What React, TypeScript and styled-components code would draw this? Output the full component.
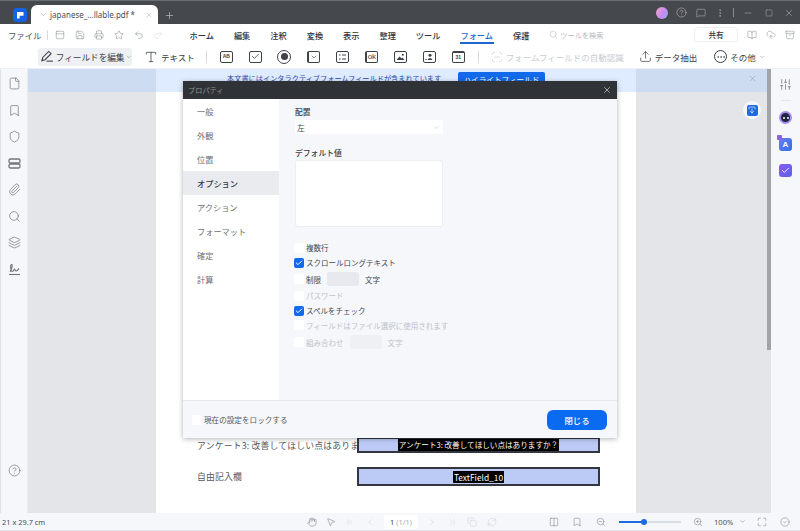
import styled, { createGlobalStyle } from 'styled-components';
import {
  Archive, Bookmark, BookOpen, Check, ChevronDown, ChevronFirst, ChevronLast, ChevronLeft, ChevronRight,
  CircleCheck, CircleHelp, CloudUpload, Columns2, Copy, Ellipsis, EllipsisVertical, File, Hand, Layers,
  Maximize, MessageSquare, Minus, MousePointer2, PanelTop, Paperclip, Plus, Printer, Redo2, RefreshCw,
  Save, ScanLine, Search, Shield, SlidersVertical, Square, Star, Type, Undo2, Upload, X, ZoomIn, ZoomOut,
} from 'lucide-react';

const GlobalStyle = createGlobalStyle`
  html, body { margin: 0; padding: 0; background: #fff; overflow: hidden; }
  * { box-sizing: border-box; }
  body { font-family: "Noto Sans CJK JP", "Noto Sans", sans-serif; color: #33373d; }
`;

const Screen = styled.div`
  position: relative;
  width: 800px;
  height: 531px;
  display: flex;
  flex-direction: column;
  overflow: hidden;
  background: #fff;
`;

/* title bar */
const TabBar = styled.div`
  height: 24px;
  background: #45484c;
  border-top: 1px solid #6b6e72;
  display: flex;
  align-items: flex-end;
  padding-left: 13px;
  flex: none;
`;
const AppLogo = styled.div`
  width: 14px;
  height: 14px;
  margin-bottom: 2px;
  border-radius: 4px;
  background: #1463e6;
  display: flex;
  align-items: center;
  justify-content: center;
  &::after {
    content: '';
    width: 7px;
    height: 7px;
    background: #fff;
    clip-path: polygon(0 0, 100% 0, 100% 60%, 45% 60%, 45% 100%, 0 100%);
  }
`;
const Tab = styled.div`
  width: 127px;
  height: 19px;
  margin-left: 4px;
  padding: 0 4px 0 8px;
  background: #fff;
  border-radius: 6px 6px 0 0;
  display: flex;
  align-items: center;
  color: #8b8f94;
`;
const TabName = styled.span`
  margin-left: 2px;
  width: 95px;
  font-size: 8px;
  font-family: "Noto Sans", sans-serif;
  white-space: nowrap;
  color: #4a4e54;
`;
const NewTab = styled.div`
  margin: 0 0 3px 6px;
  color: #c9cbce;
  display: flex;
`;
const WindowControls = styled.div`
  margin-left: auto;
  height: 23px;
  display: flex;
  align-items: center;
  color: #b9bcc0;
`;
const ControlSlot = styled.div<{ $w: number }>`
  width: ${(p) => p.$w}px;
  display: flex;
  justify-content: center;
`;
const Avatar = styled.div`
  width: 12px;
  height: 12px;
  border-radius: 50%;
  background: linear-gradient(120deg, #f5a6c8, #c78af0 55%, #8fb0f5);
`;
const VSep = styled.div<{ $h?: number; $c?: string; $ml?: number }>`
  width: 1px;
  height: ${(p) => p.$h ?? 12}px;
  margin-left: ${(p) => p.$ml ?? 0}px;
  background: ${(p) => p.$c ?? '#d7dade'};
`;

/* menu row */
const MenuRow = styled.div`
  height: 21px;
  display: flex;
  align-items: center;
  padding-left: 8px;
  flex: none;
`;
const FileMenu = styled.span`
  width: 40px;
  font-size: 8.4px;
  color: #4a4e54;
  white-space: nowrap;
`;
const QuickTools = styled.div`
  width: 143px;
  padding-left: 2px;
  display: flex;
  align-items: center;
  color: #85898f;
`;
const QuickSlot = styled.div<{ $off?: boolean }>`
  width: 19.6px;
  display: flex;
  justify-content: center;
  color: ${(p) => (p.$off ? '#d5d7da' : 'inherit')};
`;
const MenuTabs = styled.div`
  display: flex;
  align-items: center;
  height: 100%;
  gap: 20px;
`;
const MenuTab = styled.span<{ $active?: boolean }>`
  position: relative;
  font-size: 8.2px;
  font-weight: 500;
  white-space: nowrap;
  color: ${(p) => (p.$active ? '#1e66d0' : '#2f3338')};
  ${(p) =>
    p.$active &&
    `&::after {
      content: '';
      position: absolute;
      left: 0;
      right: -1px;
      bottom: -3px;
      height: 2px;
      background: #1e66d0;
    }`}
`;
const SearchBox = styled.div`
  margin-left: 20px;
  width: 147px;
  display: flex;
  align-items: center;
  gap: 2px;
  font-size: 7.2px;
  color: #b4b7bc;
  white-space: nowrap;
`;
const ShareButton = styled.div`
  width: 44px;
  height: 15px;
  border: 1px solid #eceef1;
  border-radius: 4px;
  font-size: 7.6px;
  font-weight: 500;
  display: flex;
  align-items: center;
  justify-content: center;
`;
const ShareTools = styled.div`
  display: flex;
  margin-left: 4px;
  color: #8b8f95;
`;
const ShareSlot = styled.div`
  width: 19.4px;
  display: flex;
  justify-content: center;
`;

/* form toolbar */
const Toolbar = styled.div`
  height: 24px;
  display: flex;
  align-items: center;
  padding-left: 38px;
  flex: none;
  border-bottom: 1px solid #eef0f3;
`;
const EditFields = styled.div`
  width: 94px;
  height: 18px;
  padding-left: 2px;
  background: #eef0f3;
  border-radius: 3px;
  display: flex;
  align-items: center;
  gap: 2px;
  font-size: 8.6px;
  white-space: nowrap;
  color: #3a3e44;
`;
const ToolText = styled.div<{ $ml?: number; $muted?: boolean }>`
  display: flex;
  align-items: center;
  gap: 3px;
  margin-left: ${(p) => p.$ml ?? 0}px;
  font-size: 8.5px;
  white-space: nowrap;
  color: ${(p) => (p.$muted ? '#c9ccd0' : '#3a3e44')};
`;
const MoreIcon = styled.div`
  width: 13px;
  height: 13px;
  border: 1px solid #3a3e44;
  border-radius: 50%;
  display: flex;
  align-items: center;
  justify-content: center;
`;
const FieldIcons = styled.div`
  display: flex;
  margin: 0 5px;
`;
const FieldSlot = styled.div`
  width: 29px;
  height: 14px;
  display: flex;
  align-items: center;
  justify-content: center;
`;
const FieldGlyph = styled.div<{ $top?: number; $left?: number }>`
  width: 13px;
  height: 12px;
  border: 1.3px solid #3e4248;
  border-top-width: ${(p) => p.$top ?? 1.3}px;
  border-left-width: ${(p) => p.$left ?? 1.3}px;
  border-radius: 2px;
  font-size: 5px;
  font-weight: 700;
  font-family: "Liberation Sans", sans-serif;
  color: #3e4248;
  display: flex;
  align-items: center;
  justify-content: center;
  line-height: 1;
`;
const RadioGlyph = styled.div`
  width: 14px;
  height: 14px;
  border: 1.3px solid #3e4248;
  border-radius: 50%;
  display: flex;
  align-items: center;
  justify-content: center;
  &::after {
    content: '';
    width: 7px;
    height: 7px;
    border-radius: 50%;
    background: #3e4248;
  }
`;
const OkText = styled.span`
  font-size: 8px;
  font-weight: 400;
  letter-spacing: -0.3px;
`;

/* main area */
const Body = styled.div`
  flex: 1;
  display: flex;
  min-height: 0;
`;
const LeftRail = styled.div`
  width: 28px;
  flex: none;
  background: #f5f7fb;
  border-left: 1px solid #dfe2e7;
  border-right: 1px solid #e8eaee;
  display: flex;
  flex-direction: column;
  align-items: center;
  padding: 8px 0 36px;
  gap: 13.5px;
  color: #71757b;
`;
const HelpSlot = styled.div`
  margin-top: auto;
  display: flex;
`;
const Doc = styled.div`
  position: relative;
  flex: 1;
  background: #e3e5e9;
  display: flex;
  flex-direction: column;
  align-items: center;
  min-width: 0;
`;
const Banner = styled.div`
  position: absolute;
  left: 0;
  right: 0;
  top: 0;
  height: 23px;
  padding: 3px 14px 0 199px;
  background: rgba(170, 205, 255, 0.38);
  display: flex;
  align-items: flex-start;
  color: #8d929a;
`;
const BannerText = styled.span`
  width: 231px;
  margin-top: 1px;
  font-size: 7.2px;
  line-height: 10px;
  white-space: nowrap;
  color: #2b4aa8;
`;
const HighlightButton = styled.div`
  width: 87px;
  height: 16px;
  background: #1269ea;
  border-radius: 2px;
  color: #fff;
  font-size: 7.6px;
  text-align: center;
  line-height: 15px;
`;
const BannerClose = styled.div`
  margin-left: auto;
  margin-top: 2px;
  display: flex;
`;
const Page = styled.div`
  flex: 1;
  width: 480px;
  margin-right: 7px;
  background: #fff;
  display: flex;
  flex-direction: column;
  justify-content: flex-end;
  padding: 0 36px 27px 41px;
  gap: 14px;
`;
const FormRow = styled.div`
  display: flex;
  align-items: center;
  font-size: 8.8px;
  color: #55595f;
`;
const RowLabel = styled.div`
  width: 160px;
  flex: none;
  white-space: nowrap;
  letter-spacing: 0.2px;
`;
const FieldBox = styled.div<{ $h: number; $center?: boolean }>`
  width: 243px;
  height: ${(p) => p.$h}px;
  background: #bccaf6;
  border: 2px solid #33363e;
  display: flex;
  justify-content: center;
  align-items: ${(p) => (p.$center ? 'center' : 'flex-start')};
`;
const FieldTag = styled.div<{ $size: number }>`
  background: #000;
  color: #fff;
  font-size: ${(p) => p.$size}px;
  line-height: 12px;
  padding: 0 1px;
  white-space: nowrap;
`;
const ScrollThumb = styled.div`
  position: absolute;
  top: 0;
  right: 0;
  width: 4px;
  height: 281px;
  background: #a0a3a8;
`;
const DownloadBadge = styled.div`
  position: absolute;
  top: 32px;
  right: 10px;
  width: 18px;
  height: 18px;
  border-radius: 50%;
  background: #f3f6fc;
  display: flex;
  align-items: center;
  justify-content: center;
`;
const DownloadSquare = styled.div`
  width: 11px;
  height: 11px;
  border-radius: 2px;
  background: #1f6ae0;
  color: #fff;
  display: flex;
  align-items: center;
  justify-content: center;
`;
const RightRail = styled.div`
  width: 29px;
  flex: none;
  background: #f5f7fb;
  display: flex;
  flex-direction: column;
  align-items: center;
  padding-top: 9px;
  color: #6a6e74;
`;
const RailRule = styled.div`
  width: 10px;
  height: 1px;
  margin: 9px 0 10px;
  background: #e2e4e8;
`;
const Plugin = styled.div<{ $c: string }>`
  position: relative;
  width: 13px;
  height: 13px;
  margin-bottom: 13.5px;
  border-radius: 3px;
  background: ${(p) => p.$c};
  color: #fff;
  font-size: 8px;
  font-weight: 700;
  font-family: "Liberation Sans", sans-serif;
  display: flex;
  align-items: center;
  justify-content: center;
`;
const PluginCorner = styled.div`
  position: absolute;
  left: -2px;
  top: -3px;
  width: 5px;
  height: 5px;
  border-radius: 1px;
  background: #8a63e8;
`;
const Robot = styled.div`
  width: 13px;
  height: 13px;
  margin-bottom: 13.5px;
  border-radius: 50%;
  border: 2px solid #a58ce8;
  background: #1f2440;
  display: flex;
  align-items: center;
  justify-content: center;
  gap: 2px;
  & > i {
    width: 2px;
    height: 2px;
    border-radius: 50%;
    background: #fff;
  }
`;

/* status bar */
const StatusBar = styled.div`
  height: 18px;
  flex: none;
  background: #f5f7fb;
  border-bottom: 1px solid #dfe2e7;
  display: flex;
  align-items: center;
  padding-left: 2px;
  color: #7b7f85;
`;
const SizeLabel = styled.span`
  width: 302px;
  font-size: 7.4px;
  font-family: "Noto Sans", sans-serif;
  color: #4a4e54;
`;
const StatusSlot = styled.div<{ $w: number; $off?: boolean }>`
  width: ${(p) => p.$w}px;
  flex: none;
  display: flex;
  justify-content: center;
  color: ${(p) => (p.$off ? '#cfd2d6' : 'inherit')};
`;
const PageBox = styled.div`
  width: 34px;
  height: 14px;
  flex: none;
  margin: 0 4px;
  background: #fff;
  border-radius: 2px;
  font-size: 7.4px;
  font-family: "Noto Sans", sans-serif;
  color: #aaa;
  display: flex;
  align-items: center;
  justify-content: center;
  white-space: nowrap;
  & > b {
    color: #444;
    font-weight: 400;
    margin-right: 2px;
  }
`;
const ZoomTrack = styled.div`
  position: relative;
  width: 62px;
  height: 2px;
  margin: 0 6px;
  flex: none;
  background: #d7dbe2;
`;
const ZoomFill = styled.div`
  width: 40%;
  height: 100%;
  background: #1f6ae0;
`;
const ZoomKnob = styled.div`
  position: absolute;
  left: 22px;
  top: -2px;
  width: 6px;
  height: 6px;
  border-radius: 50%;
  background: #1f6ae0;
`;
const ZoomValue = styled.div`
  width: 40px;
  flex: none;
  font-size: 7.6px;
  font-family: "Noto Sans", sans-serif;
  display: flex;
  align-items: center;
  gap: 6px;
  color: #555;
`;

/* properties dialog */
const Dialog = styled.div`
  position: absolute;
  left: 183px;
  top: 81px;
  width: 434px;
  height: 357px;
  background: #f5f7fb;
  box-shadow: 0 1px 5px rgba(0, 0, 0, 0.3);
  display: flex;
  flex-direction: column;
`;
const DialogTitle = styled.div`
  height: 18px;
  flex: none;
  background: #2f3236;
  padding: 0 5px;
  display: flex;
  align-items: center;
  justify-content: space-between;
  font-size: 7.2px;
  color: #8f9398;
  & > svg {
    color: #e2e3e5;
  }
`;
const DialogMain = styled.div`
  flex: 1;
  display: flex;
  min-height: 0;
`;
const SideNav = styled.div`
  width: 96px;
  flex: none;
  background: #fff;
`;
const NavItem = styled.div<{ $active?: boolean }>`
  height: 24px;
  padding-left: 14px;
  font-size: 8.2px;
  display: flex;
  align-items: center;
  color: ${(p) => (p.$active ? '#33373d' : '#6b6f75')};
  font-weight: ${(p) => (p.$active ? 500 : 400)};
  background: ${(p) => (p.$active ? '#e9ebef' : 'transparent')};
`;
const Options = styled.div`
  flex: 1;
  padding: 6px 0 0 16px;
  display: flex;
  flex-direction: column;
`;
const FieldLabel = styled.div<{ $mt?: number }>`
  margin-top: ${(p) => p.$mt ?? 0}px;
  font-size: 7.8px;
  line-height: 14px;
  font-weight: 500;
  color: #3a3e44;
`;
const SelectBox = styled.div`
  width: 148px;
  height: 14px;
  margin-top: 1px;
  padding: 0 3px 0 2px;
  background: #fff;
  border-radius: 2px;
  font-size: 7.8px;
  display: flex;
  align-items: center;
  justify-content: space-between;
  color: #4a4e54;
  & > svg {
    color: #a4a8ad;
  }
`;
const TextArea = styled.div`
  width: 148px;
  height: 67px;
  margin-bottom: 13px;
  background: #fff;
  border: 1px solid #eceef2;
  border-radius: 3px;
`;
const CheckRow = styled.div<{ $h: number; $off?: boolean }>`
  height: ${(p) => p.$h}px;
  margin-left: -1px;
  display: flex;
  align-items: center;
  gap: 2px;
  font-size: 7.5px;
  white-space: nowrap;
  color: ${(p) => (p.$off ? '#bfc2c7' : '#44484e')};
`;
const CheckBox = styled.div<{ $on?: boolean }>`
  width: 10px;
  height: 10px;
  flex: none;
  border-radius: 2px;
  background: ${(p) => (p.$on ? '#1269ea' : '#fff')};
  color: #fff;
  display: flex;
  align-items: center;
  justify-content: center;
`;
const LimitInput = styled.div<{ $off?: boolean }>`
  width: 32px;
  height: 14px;
  margin: 0 4px;
  border-radius: 3px;
  background: ${(p) => (p.$off ? '#eef0f4' : '#e7e9ee')};
`;
const DialogFooter = styled.div`
  height: 38px;
  flex: none;
  border-top: 1px solid #e6e8ec;
  padding: 0 10px 0 9px;
  display: flex;
  align-items: center;
  justify-content: space-between;
`;
const LockRow = styled.div`
  display: flex;
  align-items: center;
  gap: 2px;
  font-size: 7.6px;
  color: #55595f;
`;
const CloseButton = styled.div`
  width: 60px;
  height: 20px;
  border-radius: 6px;
  background: #0a6bf0;
  color: #fff;
  font-size: 8.4px;
  font-weight: 500;
  display: flex;
  align-items: center;
  justify-content: center;
`;

const s = 1.3;
const menu = ['ホーム', '編集', '注釈', '変換', '表示', '整理', 'ツール', 'フォーム', '保護'];
const nav = ['一般', '外観', '位置', 'オプション', 'アクション', 'フォーマット', '確定', '計算'];

const PenIcon = () => (
  <svg width="15" height="15" viewBox="0 0 15 15" fill="none" stroke="#3e4248" strokeWidth="1.2">
    <path d="M2 12 L3 8.5 L9.5 2 L12 4.5 L5.5 11 Z" />
    <path d="M7 12.5 H14" />
  </svg>
);

const ListGlyph = () => (
  <svg width="9" height="8" viewBox="0 0 9 8" stroke="#3e4248" strokeWidth="1">
    <path d="M1 2h1.5M4 2h4M1 6h1.5M4 6h4" />
  </svg>
);

const ImageGlyph = () => (
  <svg width="9" height="8" viewBox="0 0 9 8" fill="#3e4248">
    <path d="M0.5 7 L3.5 3.5 L5.5 5.5 L6.5 4.5 L8.5 7 Z" />
    <circle cx="6.8" cy="1.8" r="1" />
  </svg>
);

const PersonGlyph = () => (
  <svg width="9" height="8" viewBox="0 0 9 8" fill="#3e4248">
    <circle cx="5" cy="2.2" r="1.5" />
    <path d="M2.6 7 C2.8 4.8 7.2 4.8 7.4 7 Z" />
    <rect x="0.4" y="6" width="1.2" height="1" />
  </svg>
);

const RowsIcon = () => (
  <svg width="13" height="13" viewBox="0 0 13 13" fill="none" stroke="currentColor" strokeWidth="1.3">
    <rect x="1" y="2" width="11" height="4" rx="1.5" />
    <rect x="1" y="7" width="11" height="4" rx="1.5" />
  </svg>
);

const SignIcon = () => (
  <svg width="13" height="13" viewBox="0 0 13 13" fill="none" stroke="currentColor" strokeWidth="1.1">
    <path d="M2 9 C4 6 5 1 3.5 1.5 C2 2 2.5 8 4.5 8.5 C6 8.5 5.8 6 6.5 6 C7 6 7 8.5 8.5 8 C9.5 7.6 10 6.5 11 5.5" />
    <path d="M1 11.5 H12" />
  </svg>
);

export default function App() {
  return (
    <>
      <GlobalStyle />
      <Screen>
        <TabBar>
          <AppLogo />
          <Tab>
            <ChevronDown size={9} strokeWidth={s} />
            <TabName>japanese_…llable.pdf *</TabName>
            <X size={8} strokeWidth={s} color="#9a9ea3" />
          </Tab>
          <NewTab>
            <Plus size={11} strokeWidth={s} />
          </NewTab>
          <WindowControls>
            <ControlSlot $w={20}><Avatar /></ControlSlot>
            <ControlSlot $w={19}><CircleHelp size={11} strokeWidth={s} /></ControlSlot>
            <ControlSlot $w={19}><MessageSquare size={10} strokeWidth={s} /></ControlSlot>
            <ControlSlot $w={19}><EllipsisVertical size={10} strokeWidth={s} /></ControlSlot>
            <ControlSlot $w={8}><VSep $h={9} $c="#888b8f" /></ControlSlot>
            <ControlSlot $w={22}><Minus size={10} strokeWidth={s} /></ControlSlot>
            <ControlSlot $w={19}><Square size={8} strokeWidth={s} /></ControlSlot>
            <ControlSlot $w={22}><X size={10} strokeWidth={s} /></ControlSlot>
          </WindowControls>
        </TabBar>

        <MenuRow>
          <FileMenu>ファイル</FileMenu>
          <VSep $h={10} />
          <QuickTools>
            <QuickSlot><PanelTop size={10} strokeWidth={s} /></QuickSlot>
            <QuickSlot><Save size={10} strokeWidth={s} /></QuickSlot>
            <QuickSlot><Printer size={10} strokeWidth={s} /></QuickSlot>
            <QuickSlot><Star size={10} strokeWidth={s} /></QuickSlot>
            <QuickSlot><Undo2 size={10} strokeWidth={s} /></QuickSlot>
            <QuickSlot $off><Redo2 size={10} strokeWidth={s} /></QuickSlot>
          </QuickTools>
          <MenuTabs>
            {menu.map((m) => (
              <MenuTab key={m} $active={m === 'フォーム'}>{m}</MenuTab>
            ))}
          </MenuTabs>
          <SearchBox>
            <Search size={9} strokeWidth={s} />
            ツールを検索
          </SearchBox>
          <ShareButton>共有</ShareButton>
          <ShareTools>
            <ShareSlot><BookOpen size={10} strokeWidth={s} /></ShareSlot>
            <ShareSlot><CloudUpload size={10} strokeWidth={s} /></ShareSlot>
            <ShareSlot><Archive size={10} strokeWidth={s} /></ShareSlot>
          </ShareTools>
        </MenuRow>

        <Toolbar>
          <EditFields>
            <PenIcon />
            フィールドを編集
            <ChevronDown size={6} strokeWidth={s} />
          </EditFields>
          <ToolText $ml={12}>
            <Type size={14} strokeWidth={s} />
            テキスト
          </ToolText>
          <VSep $h={12} $ml={11} />
          <FieldIcons>
            <FieldSlot><FieldGlyph>AB</FieldGlyph></FieldSlot>
            <FieldSlot><FieldGlyph><Check size={9} strokeWidth={2.2} /></FieldGlyph></FieldSlot>
            <FieldSlot><RadioGlyph /></FieldSlot>
            <FieldSlot><FieldGlyph $left={2.5}><ChevronDown size={8} strokeWidth={2} /></FieldGlyph></FieldSlot>
            <FieldSlot><FieldGlyph><ListGlyph /></FieldGlyph></FieldSlot>
            <FieldSlot><FieldGlyph $left={2.5}><OkText>ok</OkText></FieldGlyph></FieldSlot>
            <FieldSlot><FieldGlyph><ImageGlyph /></FieldGlyph></FieldSlot>
            <FieldSlot><FieldGlyph><PersonGlyph /></FieldGlyph></FieldSlot>
            <FieldSlot><FieldGlyph $top={2.5}>31</FieldGlyph></FieldSlot>
          </FieldIcons>
          <VSep $h={12} />
          <ToolText $ml={12} $muted>
            <ScanLine size={12} strokeWidth={s} />
            フォームフィールドの自動認識
          </ToolText>
          <ToolText $ml={15}>
            <Upload size={13} strokeWidth={s} />
            データ抽出
          </ToolText>
          <ToolText $ml={17}>
            <MoreIcon><Ellipsis size={10} strokeWidth={1.6} /></MoreIcon>
            その他
            <ChevronDown size={6} strokeWidth={s} />
          </ToolText>
        </Toolbar>

        <Body>
          <LeftRail>
            <File size={13} strokeWidth={s} />
            <Bookmark size={13} strokeWidth={s} />
            <Shield size={13} strokeWidth={s} />
            <RowsIcon />
            <Paperclip size={13} strokeWidth={s} />
            <Search size={13} strokeWidth={s} />
            <Layers size={13} strokeWidth={s} />
            <SignIcon />
            <HelpSlot><CircleHelp size={13} strokeWidth={s} /></HelpSlot>
          </LeftRail>

          <Doc>
            <Page>
              <FormRow>
                <RowLabel>アンケート3: 改善してほしい点はありま</RowLabel>
                <FieldBox $h={16}>
                  <FieldTag $size={7.6}>アンケート3: 改善してほしい点はありますか？</FieldTag>
                </FieldBox>
              </FormRow>
              <FormRow>
                <RowLabel>自由記入欄</RowLabel>
                <FieldBox $h={19} $center>
                  <FieldTag $size={8.4}>TextField_10</FieldTag>
                </FieldBox>
              </FormRow>
            </Page>
            <Banner>
              <BannerText>本文書にはインタラクティブフォームフィールドが含まれています</BannerText>
              <HighlightButton>ハイライトフィールド</HighlightButton>
              <BannerClose><X size={9} strokeWidth={s} /></BannerClose>
            </Banner>
            <ScrollThumb />
            <DownloadBadge>
              <DownloadSquare>
                <Upload size={8} strokeWidth={1.8} style={{ transform: 'rotate(180deg)' }} />
              </DownloadSquare>
            </DownloadBadge>
          </Doc>

          <RightRail>
            <SlidersVertical size={13} strokeWidth={s} />
            <RailRule />
            <Robot><i /><i /></Robot>
            <Plugin $c="linear-gradient(135deg,#6f7cf2,#2f6fe8)"><PluginCorner />A</Plugin>
            <Plugin $c="linear-gradient(135deg,#8a5cf0,#5a62ea)"><Check size={9} strokeWidth={2.4} /></Plugin>
          </RightRail>
        </Body>

        <StatusBar>
          <SizeLabel>21 x 29.7 cm</SizeLabel>
          <StatusSlot $w={19}><Hand size={10} strokeWidth={s} /></StatusSlot>
          <StatusSlot $w={19}><MousePointer2 size={10} strokeWidth={s} /></StatusSlot>
          <StatusSlot $w={20} $off><ChevronFirst size={10} strokeWidth={s} /></StatusSlot>
          <StatusSlot $w={20} $off><ChevronLeft size={10} strokeWidth={s} /></StatusSlot>
          <PageBox><b>1</b>(1/1)</PageBox>
          <StatusSlot $w={20} $off><ChevronRight size={10} strokeWidth={s} /></StatusSlot>
          <StatusSlot $w={20} $off><ChevronLast size={10} strokeWidth={s} /></StatusSlot>
          <StatusSlot $w={20} $off><Copy size={10} strokeWidth={s} /></StatusSlot>
          <StatusSlot $w={20} $off><RefreshCw size={10} strokeWidth={s} /></StatusSlot>
          <StatusSlot $w={40} />
          <StatusSlot $w={23}><Columns2 size={10} strokeWidth={s} /></StatusSlot>
          <StatusSlot $w={23}><Bookmark size={10} strokeWidth={s} /></StatusSlot>
          <StatusSlot $w={25}><ZoomOut size={10} strokeWidth={s} /></StatusSlot>
          <ZoomTrack>
            <ZoomFill />
            <ZoomKnob />
          </ZoomTrack>
          <StatusSlot $w={22}><ZoomIn size={10} strokeWidth={s} /></StatusSlot>
          <StatusSlot $w={5} />
          <ZoomValue>100%<ChevronDown size={7} strokeWidth={s} /></ZoomValue>
          <StatusSlot $w={16}><Maximize size={10} strokeWidth={s} /></StatusSlot>
          <StatusSlot $w={30}><CircleCheck size={10} strokeWidth={s} /></StatusSlot>
        </StatusBar>

        <Dialog>
          <DialogTitle>
            プロパティ
            <X size={10} strokeWidth={1.5} />
          </DialogTitle>
          <DialogMain>
            <SideNav>
              {nav.map((n) => (
                <NavItem key={n} $active={n === 'オプション'}>{n}</NavItem>
              ))}
            </SideNav>
            <Options>
              <FieldLabel>配置</FieldLabel>
              <SelectBox>
                左
                <ChevronDown size={7} strokeWidth={s} />
              </SelectBox>
              <FieldLabel $mt={12}>デフォルト値</FieldLabel>
              <TextArea />
              <CheckRow $h={15}><CheckBox />複数行</CheckRow>
              <CheckRow $h={15}><CheckBox $on><Check size={8} strokeWidth={3} /></CheckBox>スクロールロングテキスト</CheckRow>
              <CheckRow $h={18}><CheckBox />制限<LimitInput />文字</CheckRow>
              <CheckRow $h={15} $off><CheckBox />パスワード</CheckRow>
              <CheckRow $h={15}><CheckBox $on><Check size={8} strokeWidth={3} /></CheckBox>スペルをチェック</CheckRow>
              <CheckRow $h={14} $off><CheckBox />フィールドはファイル選択に使用されます</CheckRow>
              <CheckRow $h={20} $off><CheckBox />組み合わせ<LimitInput $off />文字</CheckRow>
            </Options>
          </DialogMain>
          <DialogFooter>
            <LockRow><CheckBox />現在の設定をロックする</LockRow>
            <CloseButton>閉じる</CloseButton>
          </DialogFooter>
        </Dialog>
      </Screen>
    </>
  );
}
